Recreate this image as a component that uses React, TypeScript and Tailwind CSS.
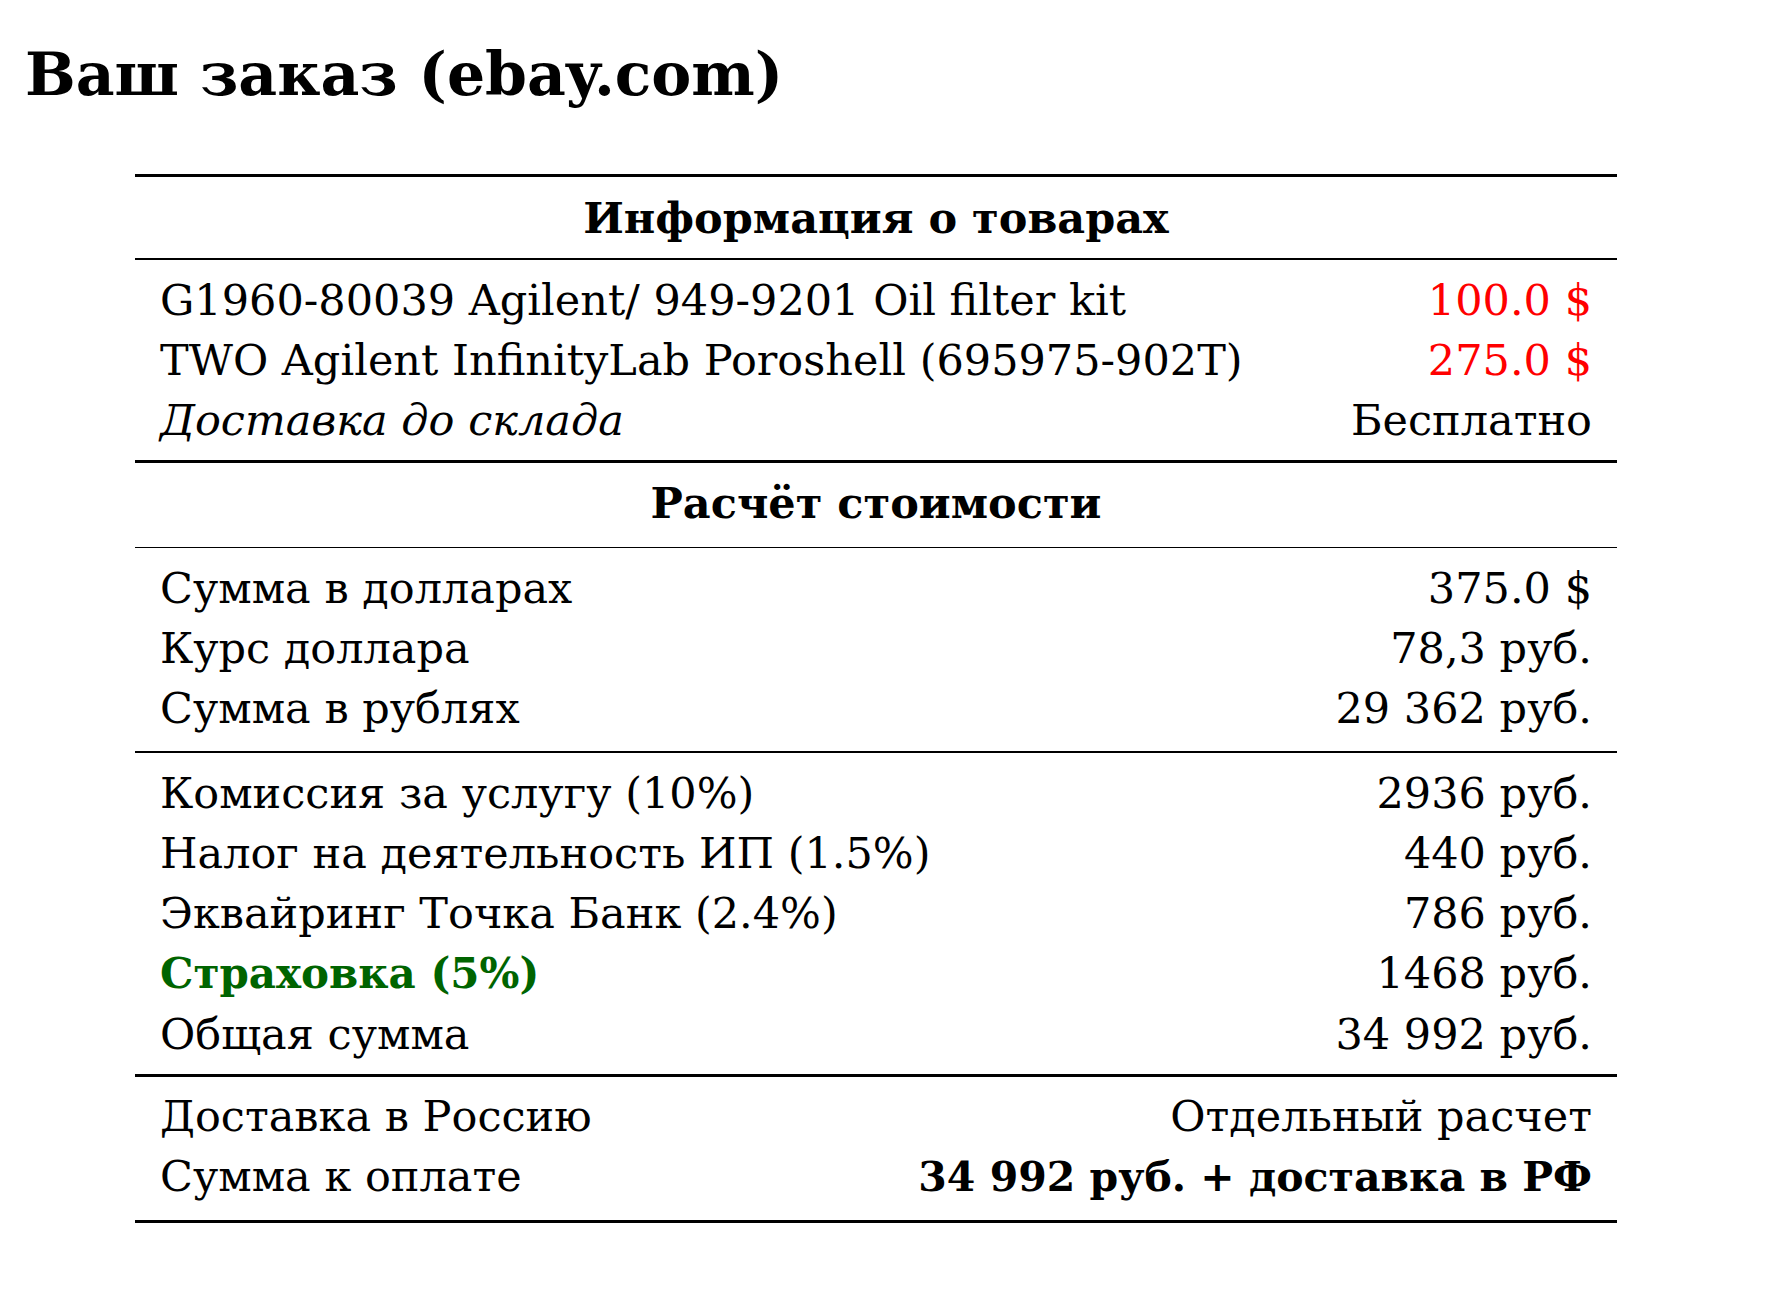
import React from 'react';

type Row = { label: React.ReactNode; value: React.ReactNode };

function Section({ rows, className }: { rows: Row[]; className?: string }) {
	return (
		<div className={className}>
			{rows.map((r, i) => (
				<div key={i} className="flex items-baseline justify-between px-[25px] leading-[60px]">
					<span>{r.label}</span>
					<span className="text-right">{r.value}</span>
				</div>
			))}
		</div>
	);
}

export default function App() {
	const goods: Row[] = [
		{ label: 'G1960-80039 Agilent/ 949-9201 Oil filter kit', value: <span className="text-[#ff0000]">100.0 $</span> },
		{ label: 'TWO Agilent InfinityLab Poroshell (695975-902T)', value: <span className="text-[#ff0000]">275.0 $</span> },
		{ label: <i>Доставка до склада</i>, value: 'Бесплатно' },
	];
	const sums: Row[] = [
		{ label: 'Сумма в долларах', value: '375.0 $' },
		{ label: 'Курс доллара', value: '78,3 руб.' },
		{ label: 'Сумма в рублях', value: '29 362 руб.' },
	];
	const fees: Row[] = [
		{ label: 'Комиссия за услугу (10%)', value: '2936 руб.' },
		{ label: 'Налог на деятельность ИП (1.5%)', value: '440 руб.' },
		{ label: 'Эквайринг Точка Банк (2.4%)', value: '786 руб.' },
		{ label: <b className="text-[42px] text-[#006400]">Страховка (5%)</b>, value: '1468 руб.' },
		{ label: 'Общая сумма', value: '34 992 руб.' },
	];
	const total: Row[] = [
		{ label: 'Доставка в Россию', value: 'Отдельный расчет' },
		{ label: 'Сумма к оплате', value: <b className="text-[41px]">34 992 руб. + доставка в РФ</b> },
	];

	return (
		<div className="min-h-screen bg-white text-black font-['DejaVu_Serif',serif]">
			<h1 className="pl-[25px] pt-[38px] text-[60px] font-bold leading-[72px]">Ваш заказ (ebay.com)</h1>

			<div className="ml-[135px] mt-[64px] w-[1482px] text-[43px]">
				<div className="border-t-[3px] border-b-2 border-black pt-[11px] pb-[10px] text-center font-bold leading-[60px]">
					Информация о товарах
				</div>
				<Section rows={goods} className="pt-[10px] pb-[10px]" />
				<div className="border-t-[3px] border-b-[1.5px] border-black pt-[10px] pb-[14px] text-center font-bold leading-[60px]">
					Расчёт стоимости
				</div>
				<Section rows={sums} className="pt-[10px] pb-[13px]" />
				<Section rows={fees} className="border-t-2 border-black pt-[10px] pb-[10px]" />
				<Section rows={total} className="border-t-[3px] border-b-[3px] border-black pt-[9px] pb-[13px]" />
			</div>
		</div>
	);
}
